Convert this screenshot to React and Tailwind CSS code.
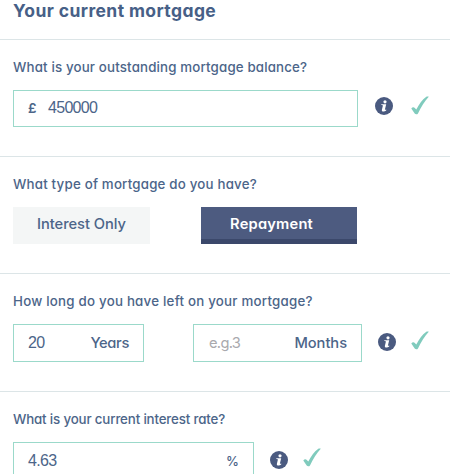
const geo = "font-['Inter','Noto_Sans',sans-serif] [font-feature-settings:'cv11','ss03']";
const digits = "font-['Liberation_Sans',Arial,sans-serif] text-[16px] tracking-[-0.7px] -mt-px";

function InfoIcon() {
  return (
    <svg viewBox="0 0 18 18" className="h-[18px] w-[18px] shrink-0" aria-label="Info">
      <circle cx="9" cy="9" r="9" fill="#4a5a80" />
      <circle cx="10" cy="4.8" r="1.6" fill="#fff" />
      <path d="M6.300 7.200h4.900l-1.300 5.300c-.1.5.3.5 1.300-.1l.1.8c-1.200 1-2 1.300-3 1.300-1.200 0-1.700-.6-1.400-1.800l.9-3.800c.1-.5-.1-.7-1.500-.8z" fill="#fff" />
    </svg>
  );
}

function Tick({ className = "" }) {
  return (
    <svg viewBox="0 0 18 19" className={`h-[19px] w-[18px] shrink-0 ${className}`} aria-label="Valid">
      <path d="M.3 12.400c1-1.200 2.500-1.500 3.500-.5l1.500 1.700C8.100 8.200 11.200 3.400 15 .9c.8-.5 2-.5 2.800-.2C13.800 4.800 10 10.800 7 17.400c-.7 1.200-2.600 1.200-3.300.1z" fill="#80cbbd" />
    </svg>
  );
}

function Section({ question, tracking, height, children }) {
  return (
    <section className={`border-t border-[#dce5e7] pl-[13px] ${height}`}>
      <h2 className={`${geo} ${tracking} mt-[17px] h-5 text-[13.3px] leading-5 font-medium whitespace-nowrap text-[#4c6589]`}>
        {question}
      </h2>
      {children}
    </section>
  );
}

function Field({ className, children }) {
  return (
    <div className={`flex items-center border border-[#9bd9ca] pl-[14px] text-[14.7px] leading-5 text-[#4c6589] ${className}`}>
      {children}
    </div>
  );
}

export default function App() {
  return (
    <main className="h-[474px] w-[450px] overflow-hidden bg-white">
      <header className="h-[39px] pl-[13px]">
        <h1 className={`${geo} text-[17.5px] leading-[22px] font-bold tracking-[0.4px] whitespace-nowrap text-[#476087]`}>
          Your current mortgage
        </h1>
      </header>

      <Section question="What is your outstanding mortgage balance?" tracking="tracking-[0.16px]" height="h-[117px]">
        <div className="mt-[13px] flex items-center">
          <Field className="h-[37px] w-[345px] pb-px">
            <span className={`${geo} w-[20px] text-[13.5px] font-semibold`}>£</span>
            <span className={digits}>450000</span>
          </Field>
          <div className="ml-[17px] flex -translate-y-[3px] items-center gap-[18px]">
            <InfoIcon />
            <Tick />
          </div>
        </div>
      </Section>

      <Section question="What type of mortgage do you have?" tracking="tracking-[0.2px]" height="h-[117px]">
        <div className="mt-[13px] flex gap-[51px]">
          <button className={`${geo} h-[37px] w-[137px] bg-[#f4f6f6] pb-[3px] text-[14.7px] font-medium tracking-[-0.05px] text-[#4c6589]`}>
            Interest Only
          </button>
          <button className={`${geo} h-[37px] w-[156px] border-b-[5px] border-[#3b486b] bg-[#4d5b80] pt-[2px] pr-[15px] text-[14.7px] font-semibold tracking-[0.2px] text-white`}>
            Repayment
          </button>
        </div>
      </Section>

      <Section question="How long do you have left on your mortgage?" tracking="tracking-[0.23px]" height="h-[118px]">
        <div className="mt-[13px] flex items-center">
          <Field className="h-[38px] w-[131px] justify-between pr-[14px]">
            <span className={digits}>20</span>
            <span className={`${geo} font-medium tracking-[-0.35px]`}>Years</span>
          </Field>
          <Field className="ml-[49px] h-[38px] w-[169px] justify-between pr-[14px]">
            <span className={`${geo} pl-px tracking-[-0.7px] text-[#a9a9ad]`}>e.g.3</span>
            <span className={`${geo} font-medium tracking-[-0.05px]`}>Months</span>
          </Field>
          <div className="ml-[16px] flex -translate-y-[1px] items-center gap-[15px]">
            <InfoIcon />
            <Tick className="-translate-y-[2px]" />
          </div>
        </div>
      </Section>

      <Section question="What is your current interest rate?" tracking="tracking-[-0.15px]" height="h-[117px]">
        <div className="mt-[13px] flex items-center">
          <Field className="h-[38px] w-[241px] justify-between pr-[14px]">
            <span className={digits}>4.63</span>
            <span className={`${geo} text-[13px] font-medium`}>%</span>
          </Field>
          <div className="ml-[16px] flex -translate-y-[1px] items-center gap-[15px]">
            <InfoIcon />
            <Tick className="-translate-y-[3px]" />
          </div>
        </div>
      </Section>
    </main>
  );
}
